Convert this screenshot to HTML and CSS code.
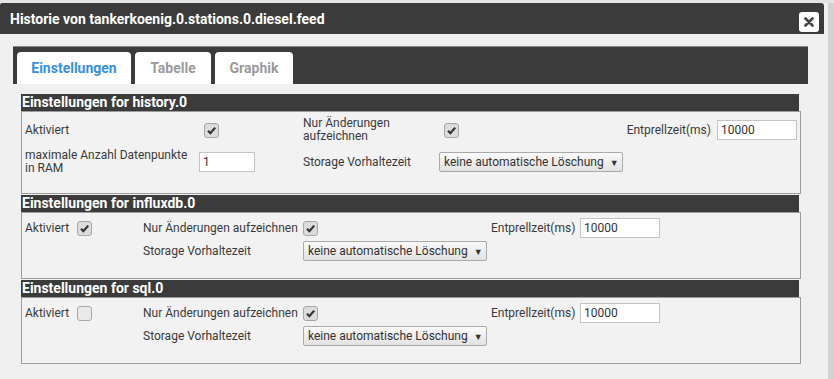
FILE: index.html
```html
<!DOCTYPE html>
<html>
<head>
    <title>Historie</title>
    <link rel="stylesheet" href="styles.css">
</head>
<body>
    <div class="page">
        <div class="dialog">
            <div class="titlebar">
                <span class="title">Historie von tankerkoenig.0.stations.0.diesel.feed</span>
                <button class="close" type="button">
                    <svg width="10" height="10" viewBox="0 0 10 10"><path d="M1.5 1.5 L8.5 8.5 M8.5 1.5 L1.5 8.5" stroke="#444" stroke-width="2.6" stroke-linecap="round"/></svg>
                </button>
            </div>
            <div class="content">
                <div class="tabbar">
                    <div class="tab active">Einstellungen</div>
                    <div class="tab">Tabelle</div>
                    <div class="tab">Graphik</div>
                </div>

                <div class="section first">
                    <div class="section-head">Einstellungen for history.0</div>
                    <div class="section-box grid-history">
                        <div class="lbl">Aktiviert</div>
                        <div class="cell"><span class="cb checked"></span></div>
                        <div class="lbl">Nur Änderungen<br>aufzeichnen</div>
                        <div class="cell split"><span class="cb checked"></span><span class="lbl right">Entprellzeit(ms)</span></div>
                        <div class="cell"><input class="num" type="text" value="10000"></div>

                        <div class="lbl">maximale Anzahl Datenpunkte<br>in RAM</div>
                        <div class="cell"><input class="num small" type="text" value="1"></div>
                        <div class="lbl">Storage Vorhaltezeit</div>
                        <div class="cell wide"><span class="select">keine automatische Löschung <span class="arrow">▼</span></span></div>
                    </div>
                </div>

                <div class="section">
                    <div class="section-head">Einstellungen for influxdb.0</div>
                    <div class="section-box grid-db">
                        <div class="lbl">Aktiviert</div>
                        <div class="cell"><span class="cb checked"></span></div>
                        <div class="lbl">Nur Änderungen aufzeichnen</div>
                        <div class="cell"><span class="cb checked"></span></div>
                        <div class="lbl">Entprellzeit(ms)</div>
                        <div class="cell"><input class="num" type="text" value="10000"></div>

                        <div class="lbl col3">Storage Vorhaltezeit</div>
                        <div class="cell"><span class="select">keine automatische Löschung <span class="arrow">▼</span></span></div>
                    </div>
                </div>

                <div class="section">
                    <div class="section-head">Einstellungen for sql.0</div>
                    <div class="section-box grid-db">
                        <div class="lbl">Aktiviert</div>
                        <div class="cell"><span class="cb"></span></div>
                        <div class="lbl">Nur Änderungen aufzeichnen</div>
                        <div class="cell"><span class="cb checked"></span></div>
                        <div class="lbl">Entprellzeit(ms)</div>
                        <div class="cell"><input class="num" type="text" value="10000"></div>

                        <div class="lbl col3">Storage Vorhaltezeit</div>
                        <div class="cell"><span class="select">keine automatische Löschung <span class="arrow">▼</span></span></div>
                    </div>
                </div>
            </div>
        </div>
        <div class="scroller"></div>
    </div>
</body>
</html>
```

FILE: styles.css
```css
body {
    margin: 0;
    padding: 0;
    background-color: #f0f0f0;
    font-family: Roboto, "Noto Sans", sans-serif;
    font-size: 12px;
    color: #3a3a3a;
}
.page {
    display: flex;
    height: 379px;
    border-top: 3px solid #e4e4e4;
    box-sizing: border-box;
}
.dialog {
    width: 824px;
}
.scroller {
    width: 6px;
    margin-left: 4px;
    background-color: #d2d2d2;
}
.titlebar {
    height: 31px;
    background-color: #3b3b3b;
    border-radius: 2px 3px 0 0;
    display: flex;
    align-items: center;
    justify-content: space-between;
    padding: 0 5px 0 10px;
}
.title {
    color: #fff;
    font-weight: bold;
    font-size: 14px;
}
.close {
    width: 20px;
    height: 20px;
    padding: 0;
    border: none;
    border-radius: 3px;
    background-color: #fff;
    display: flex;
    align-items: center;
    justify-content: center;
    margin-top: 6px;
}
.content {
    padding: 12px 16px 0 13px;
}
.tabbar {
    display: flex;
    gap: 4px;
    align-items: flex-end;
    width: 791px;
    height: 32px;
    padding: 5px 0 0 4px;
    background-color: #3b3b3b;
    border-top: 1px solid #8a8a8a;
}
.tab {
    height: 32px;
    line-height: 33px;
    box-sizing: border-box;
    background-color: #fff;
    border-radius: 4px 4px 0 0;
    font-weight: bold;
    font-size: 14px;
    color: #9a9a9a;
    text-align: center;
}
.tab.active {
    width: 114px;
    color: #3590e4;
}
.tab:nth-child(2) {
    width: 76px;
}
.tab:nth-child(3) {
    width: 78px;
}
.section {
    margin-left: 8px;
    margin-top: 1px;
    width: 780px;
}
.section.first {
    margin-top: 10px;
}
.section-head {
    width: 777px;
    height: 17px;
    line-height: 17px;
    padding-left: 1px;
    background-color: #3b3b3b;
    color: #fff;
    font-weight: bold;
    font-size: 14px;
}
.section-box {
    border: 1px solid #9c9c9c;
    background-color: #f2f2f2;
    display: grid;
    align-items: center;
}
.grid-history {
    grid-template-columns: 174px 104px 136px 1fr 80px;
    grid-auto-rows: 26px;
    row-gap: 6px;
    padding: 5px 3px 18px 3px;
    line-height: 13px;
}
.grid-db {
    grid-template-columns: 52px 66px 160px 188px 89px 81px;
    grid-auto-rows: 20px;
    row-gap: 3px;
    padding: 5px 3px 17px 3px;
}
.col3 {
    grid-column: 3;
}
.wide {
    grid-column: 4 / span 2;
}
.cell {
    display: flex;
    align-items: center;
}
.split {
    justify-content: space-between;
}
.right {
    margin-right: 6px;
}
.cb {
    display: inline-block;
    width: 13px;
    height: 13px;
    margin-left: 5px;
    border: 1px solid #a8a8a8;
    border-radius: 3px;
    background-color: #e9e9e9;
}
.grid-db .cb {
    margin-left: 0;
}
.cb.checked {
    background: #dcdcdc url("data:image/svg+xml;utf8,<svg xmlns='http://www.w3.org/2000/svg' width='13' height='13' viewBox='0 0 13 13'><path d='M3 6.8 L5.4 9.2 L10.2 3.6' fill='none' stroke='%23333' stroke-width='2.2'/></svg>") no-repeat center;
}
.num {
    width: 80px;
    height: 20px;
    box-sizing: border-box;
    margin: 0;
    padding: 0 3px;
    border: 1px solid #c4c4c4;
    background-color: #fff;
    font-family: Roboto, "Noto Sans", sans-serif;
    font-size: 12px;
    color: #333;
}
.num.small {
    width: 56px;
}
.select {
    display: inline-block;
    width: 184px;
    height: 20px;
    line-height: 18px;
    box-sizing: border-box;
    padding-left: 4px;
    border: 1px solid #aaa;
    border-radius: 2px;
    background: linear-gradient(#fafafa, #e2e2e2);
    color: #333;
}
.arrow {
    font-size: 9px;
    margin-left: 3px;
}
```
